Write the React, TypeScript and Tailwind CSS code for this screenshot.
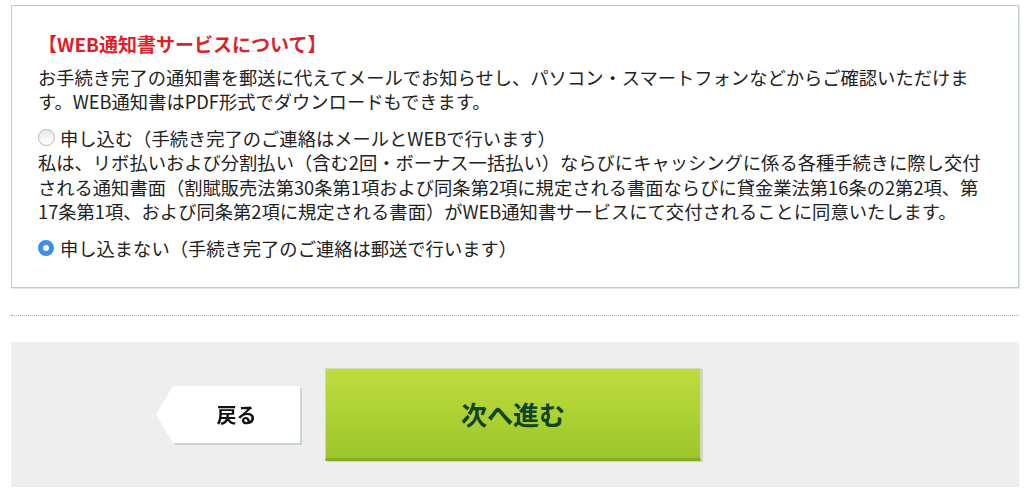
import React from "react";

const jp = "font-['Noto_Sans_CJK_JP','Noto_Sans',sans-serif]";

const Radio = ({ checked }: { checked?: boolean }) => {
  if (checked) {
    return (
      <span className="inline-flex h-[16px] w-[16px] shrink-0 items-center justify-center rounded-full bg-[#3d8eea]">
        <span className="h-[6px] w-[6px] rounded-full bg-white" />
      </span>
    );
  }
  return (
    <span className="inline-block h-[17px] w-[17px] shrink-0 rounded-full border border-[#b5b5b5] bg-gradient-to-b from-[#e9e9e9] to-white" />
  );
};

const App = () => {
  return (
    <div className={`min-h-[497px] w-[1024px] bg-white pl-[11px] pr-[5px] pt-[5px] text-[#222] ${jp}`}>
      {/* WEB通知書 box */}
      <div className="border border-[#b9ccc7] pb-[27px] pl-[26px] pt-[26px] shadow-[1px_1px_0_#dfe8e5]">
        <div className="w-[960px] whitespace-nowrap text-[18.3px] leading-[24.5px]">
          <p className="text-[19px] font-bold text-[#dc1f2a]">【WEB通知書サービスについて】</p>
          <p className="mt-[8px]">
            お手続き完了の通知書を郵送に代えてメールでお知らせし、パソコン・スマートフォンなどからご確認いただけま
            <br />
            す。WEB通知書はPDF形式でダウンロードもできます。
          </p>
          <div className="mt-[12px]">
            <label className="flex items-center gap-[5px]">
              <Radio />
              <span>申し込む（手続き完了のご連絡はメールとWEBで行います）</span>
            </label>
            <p>
              私は、リボ払いおよび分割払い（含む2回・ボーナス一括払い）ならびにキャッシングに係る各種手続きに際し交付
              <br />
              される通知書面（割賦販売法第30条第1項および同条第2項に規定される書面ならびに貸金業法第16条の2第2項、第
              <br />
              17条第1項、および同条第2項に規定される書面）がWEB通知書サービスにて交付されることに同意いたします。
            </p>
          </div>
          <label className="mt-[12px] flex items-center gap-[6px]">
            <Radio checked />
            <span>申し込まない（手続き完了のご連絡は郵送で行います）</span>
          </label>
        </div>
      </div>

      <div className="mt-[27px] border-t border-dotted border-[#8fb3aa]" />

      {/* footer buttons */}
      <div className="mt-[26px] flex h-[145px] items-center bg-[#eeeeee] pl-[145px]">
        <div className="drop-shadow-[2px_2px_0_#c7d4d1]">
          <button
            className={`flex h-[57px] w-[144px] items-center justify-center bg-white pl-[17px] text-[20px] font-bold text-[#111] [clip-path:polygon(17px_0,100%_0,100%_100%,17px_100%,0_50%)] ${jp}`}
          >
            戻る
          </button>
        </div>
        <button
          className={`ml-[25px] flex h-[93px] w-[376px] items-center justify-center border border-[#cfd9b4] border-b-[3px] border-b-[#85ad1f] bg-gradient-to-b from-[#bfdc3d] to-[#9cc72a] text-[26px] font-bold text-[#0f4526] shadow-[2px_1px_0_#cfd4c6] ${jp}`}
        >
          次へ進む
        </button>
      </div>
    </div>
  );
};

export default App;
